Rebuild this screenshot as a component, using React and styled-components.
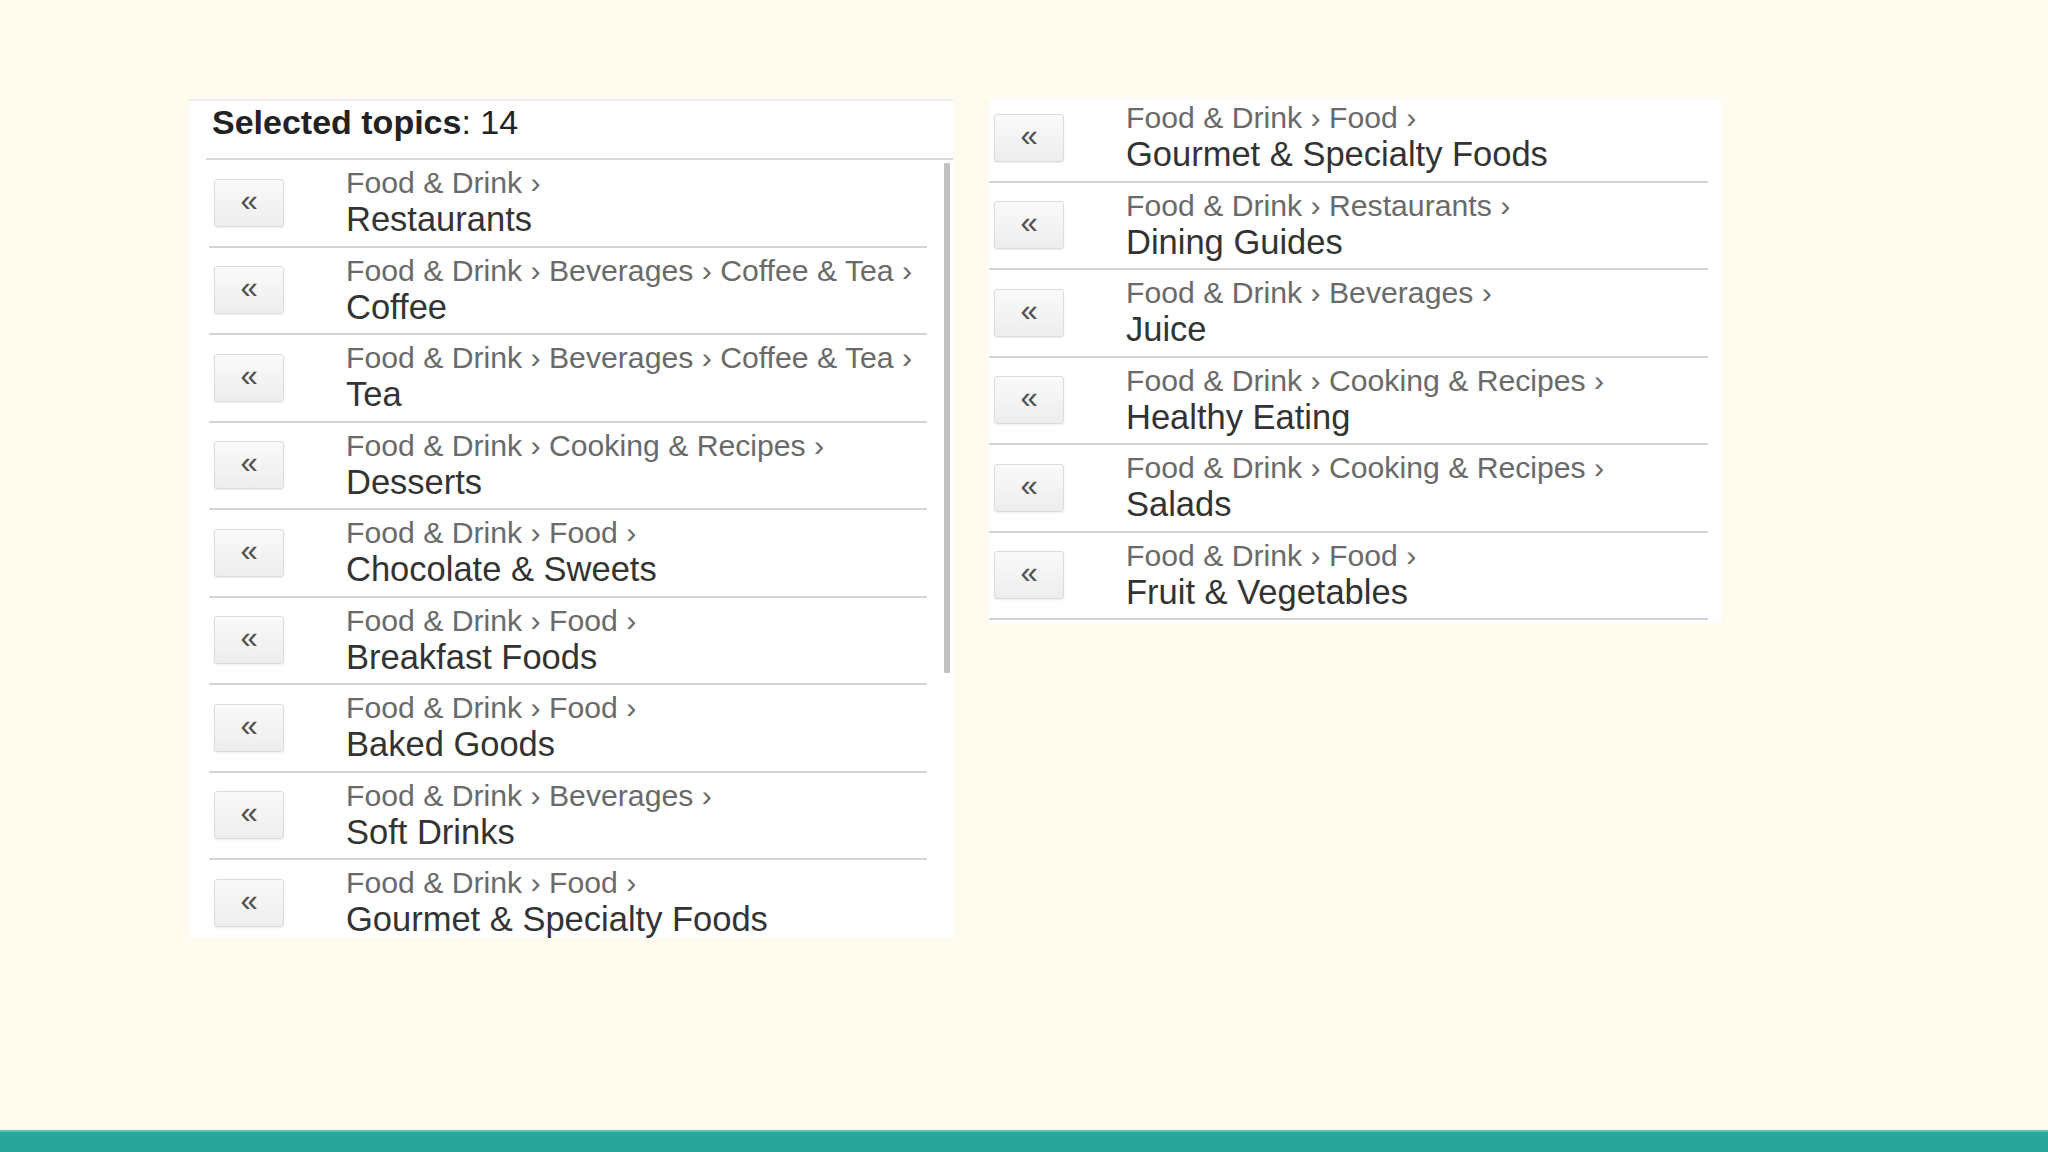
import styled, { createGlobalStyle } from "styled-components";

const topics = [
  { path: ["Food & Drink"], name: "Restaurants" },
  { path: ["Food & Drink", "Beverages", "Coffee & Tea"], name: "Coffee" },
  { path: ["Food & Drink", "Beverages", "Coffee & Tea"], name: "Tea" },
  { path: ["Food & Drink", "Cooking & Recipes"], name: "Desserts" },
  { path: ["Food & Drink", "Food"], name: "Chocolate & Sweets" },
  { path: ["Food & Drink", "Food"], name: "Breakfast Foods" },
  { path: ["Food & Drink", "Food"], name: "Baked Goods" },
  { path: ["Food & Drink", "Beverages"], name: "Soft Drinks" },
  { path: ["Food & Drink", "Food"], name: "Gourmet & Specialty Foods" },
  { path: ["Food & Drink", "Restaurants"], name: "Dining Guides" },
  { path: ["Food & Drink", "Beverages"], name: "Juice" },
  { path: ["Food & Drink", "Cooking & Recipes"], name: "Healthy Eating" },
  { path: ["Food & Drink", "Cooking & Recipes"], name: "Salads" },
  { path: ["Food & Drink", "Food"], name: "Fruit & Vegetables" },
];

const TopicRow = ({ item }) => (
  <Row>
    <ButtonCell>
      <RemoveButton>«</RemoveButton>
    </ButtonCell>
    <TextCell>
      <Crumbs>{item.path.map((p) => p + " › ").join("")}</Crumbs>
      <Name>{item.name}</Name>
    </TextCell>
  </Row>
);

const App = () => {
  return (
    <Page>
      <GlobalStyle />
      <Main>
        <LeftPanel>
          <Header>
            <b>Selected topics</b>: {topics.length}
          </Header>
          <ListArea>
            <List>
              {topics.map((item, index) => (
                <TopicRow key={index + item.name} item={item} />
              ))}
            </List>
            <ScrollTrack>
              <ScrollThumb />
            </ScrollTrack>
          </ListArea>
        </LeftPanel>
        <RightPanel>
          <ClipList>
            {topics.slice(8).map((item, index) => (
              <TopicRow key={index + item.name} item={item} />
            ))}
          </ClipList>
        </RightPanel>
      </Main>
      <Footer />
    </Page>
  );
};

export default App;

const GlobalStyle = createGlobalStyle`
  body {
    margin: 0;
    background: #fffcef;
    font-family: "Liberation Sans", Arial, sans-serif;
  }
`;

const Page = styled.div`
  height: 1152px;
  display: flex;
  flex-direction: column;
  overflow: hidden;
`;

const Main = styled.div`
  display: flex;
  align-items: flex-start;
  gap: 36px;
  padding: 99px 0 0 189px;
`;

const LeftPanel = styled.div`
  width: 764px;
  height: 839px;
  background: #fff;
  border-top: 2px solid #ededed;
  box-sizing: border-box;
  padding-left: 17px;
  display: flex;
  flex-direction: column;
`;

const Header = styled.div`
  height: 59px;
  flex-shrink: 0;
  box-sizing: border-box;
  border-bottom: 2px solid #d9d9d9;
  padding: 2px 0 0 6px;
  font-size: 34px;
  line-height: 39px;
  color: #222;
  white-space: pre;
  b {
    font-weight: bold;
  }
`;

const ListArea = styled.div`
  flex: 1;
  min-height: 0;
  display: flex;
`;

const List = styled.div`
  width: 721px;
  overflow: hidden;
  padding-left: 3px;
  box-sizing: border-box;
`;

const ScrollTrack = styled.div`
  width: 6px;
  margin-left: 17px;
  padding-top: 3px;
`;

const ScrollThumb = styled.div`
  height: 510px;
  background: #c2c2c2;
  border-radius: 1px;
`;

const RightPanel = styled.div`
  width: 732px;
  height: 524px;
  background: #fff;
  padding-right: 13px;
  box-sizing: border-box;
  overflow: hidden;
`;

const ClipList = styled.div`
  margin-top: -4px;
`;

const Row = styled.div`
  height: 87.5px;
  box-sizing: border-box;
  border-bottom: 2px solid #d4d4d4;
  display: flex;
  align-items: center;
`;

const ButtonCell = styled.div`
  width: 137px;
  flex-shrink: 0;
  padding-left: 5px;
  box-sizing: border-box;
`;

const RemoveButton = styled.button`
  width: 70px;
  height: 48px;
  border: 1px solid #dcdcdc;
  border-radius: 3px;
  background: linear-gradient(#fafafa, #ededed);
  box-shadow: 0 1px 2px rgba(0, 0, 0, 0.08);
  color: #505050;
  font-family: "Liberation Sans", Arial, sans-serif;
  font-size: 31px;
  line-height: 1;
  padding: 0 0 5px;
  cursor: pointer;
`;

const TextCell = styled.div`
  display: flex;
  flex-direction: column;
`;

const Crumbs = styled.div`
  font-size: 30.2px;
  line-height: 34px;
  color: #6a6a6a;
  white-space: nowrap;
`;

const Name = styled.div`
  font-size: 34.5px;
  line-height: 39px;
  color: #333;
  white-space: nowrap;
`;

const Footer = styled.div`
  margin-top: auto;
  height: 20px;
  background: #29a69a;
  border-top: 2px solid #5cc3b8;
`;
